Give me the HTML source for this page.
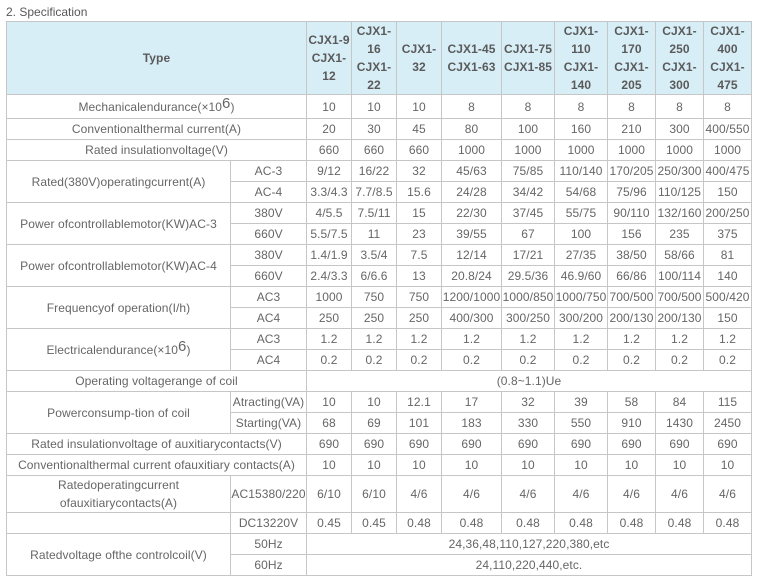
<!DOCTYPE html>
<html>
<head>
<meta charset="utf-8">
<style>
html,body{margin:0;padding:0;background:#fff;width:758px;height:585px;overflow:hidden}
body{position:relative;font-family:"Liberation Sans",Arial,sans-serif;font-size:12px;color:#666}
.t{position:absolute;left:6px;top:5px;line-height:14px;color:#585858;filter:blur(.25px)}
table{position:absolute;left:6px;top:21px;border-collapse:collapse;table-layout:fixed;width:746px;background:#fff;filter:blur(.25px)}
td{border:1px solid #c6c6c6;padding:0;text-align:center;vertical-align:middle;line-height:18px;white-space:nowrap;overflow:visible;letter-spacing:.08px}
tr.h td{background:#d8eef7;font-weight:bold;color:#5a5a5a}
.s{font-size:15px;position:relative;top:-3px;line-height:0}
</style>
</head>
<body>
<div class="t">2. Specification</div>
<table>
<colgroup><col style="width:224px"><col style="width:76px"><col style="width:45px"><col style="width:45px"><col style="width:45px"><col style="width:60px"><col style="width:53px"><col style="width:53px"><col style="width:48px"><col style="width:48px"><col style="width:48px"></colgroup>
<tr class="h" style="height:73px"><td colspan="2">Type</td><td>CJX1-9<br>CJX1-<br>12</td><td>CJX1-<br>16<br>CJX1-<br>22</td><td>CJX1-<br>32</td><td>CJX1-45<br>CJX1-63</td><td>CJX1-75<br>CJX1-85</td><td>CJX1-<br>110<br>CJX1-<br>140</td><td>CJX1-<br>170<br>CJX1-<br>205</td><td>CJX1-<br>250<br>CJX1-<br>300</td><td>CJX1-<br>400<br>CJX1-<br>475</td></tr>
<tr style="height:24px"><td colspan="2">Mechanicalendurance(×10<span class="s">6</span>)</td><td>10</td><td>10</td><td>10</td><td>8</td><td>8</td><td>8</td><td>8</td><td>8</td><td>8</td></tr>
<tr style="height:21px"><td colspan="2">Conventionalthermal current(A)</td><td>20</td><td>30</td><td>45</td><td>80</td><td>100</td><td>160</td><td>210</td><td>300</td><td>400/550</td></tr>
<tr style="height:21px"><td colspan="2">Rated insulationvoltage(V)</td><td>660</td><td>660</td><td>660</td><td>1000</td><td>1000</td><td>1000</td><td>1000</td><td>1000</td><td>1000</td></tr>
<tr style="height:21px"><td rowspan="2">Rated(380V)operatingcurrent(A)</td><td>AC-3</td><td>9/12</td><td>16/22</td><td>32</td><td>45/63</td><td>75/85</td><td>110/140</td><td>170/205</td><td>250/300</td><td>400/475</td></tr>
<tr style="height:21px"><td>AC-4</td><td>3.3/4.3</td><td>7.7/8.5</td><td>15.6</td><td>24/28</td><td>34/42</td><td>54/68</td><td>75/96</td><td>110/125</td><td>150</td></tr>
<tr style="height:21px"><td rowspan="2">Power ofcontrollablemotor(KW)AC-3</td><td>380V</td><td>4/5.5</td><td>7.5/11</td><td>15</td><td>22/30</td><td>37/45</td><td>55/75</td><td>90/110</td><td>132/160</td><td>200/250</td></tr>
<tr style="height:21px"><td>660V</td><td>5.5/7.5</td><td>11</td><td>23</td><td>39/55</td><td>67</td><td>100</td><td>156</td><td>235</td><td>375</td></tr>
<tr style="height:21px"><td rowspan="2">Power ofcontrollablemotor(KW)AC-4</td><td>380V</td><td>1.4/1.9</td><td>3.5/4</td><td>7.5</td><td>12/14</td><td>17/21</td><td>27/35</td><td>38/50</td><td>58/66</td><td>81</td></tr>
<tr style="height:21px"><td>660V</td><td>2.4/3.3</td><td>6/6.6</td><td>13</td><td>20.8/24</td><td>29.5/36</td><td>46.9/60</td><td>66/86</td><td>100/114</td><td>140</td></tr>
<tr style="height:21px"><td rowspan="2">Frequencyof operation(I/h)</td><td>AC3</td><td>1000</td><td>750</td><td>750</td><td>1200/1000</td><td>1000/850</td><td>1000/750</td><td>700/500</td><td>700/500</td><td>500/420</td></tr>
<tr style="height:21px"><td>AC4</td><td>250</td><td>250</td><td>250</td><td>400/300</td><td>300/250</td><td>300/200</td><td>200/130</td><td>200/130</td><td>150</td></tr>
<tr style="height:21px"><td rowspan="2">Electricalendurance(×10<span class="s">6</span>)</td><td>AC3</td><td>1.2</td><td>1.2</td><td>1.2</td><td>1.2</td><td>1.2</td><td>1.2</td><td>1.2</td><td>1.2</td><td>1.2</td></tr>
<tr style="height:21px"><td>AC4</td><td>0.2</td><td>0.2</td><td>0.2</td><td>0.2</td><td>0.2</td><td>0.2</td><td>0.2</td><td>0.2</td><td>0.2</td></tr>
<tr style="height:21px"><td colspan="2">Operating voltagerange of coil</td><td colspan="9">(0.8~1.1)Ue</td></tr>
<tr style="height:21px"><td rowspan="2">Powerconsump-tion of coil</td><td>Atracting(VA)</td><td>10</td><td>10</td><td>12.1</td><td>17</td><td>32</td><td>39</td><td>58</td><td>84</td><td>115</td></tr>
<tr style="height:21px"><td>Starting(VA)</td><td>68</td><td>69</td><td>101</td><td>183</td><td>330</td><td>550</td><td>910</td><td>1430</td><td>2450</td></tr>
<tr style="height:21px"><td colspan="2">Rated insulationvoltage of auxitiarycontacts(V)</td><td>690</td><td>690</td><td>690</td><td>690</td><td>690</td><td>690</td><td>690</td><td>690</td><td>690</td></tr>
<tr style="height:21px"><td colspan="2">Conventionalthermal current ofauxitiary contacts(A)</td><td>10</td><td>10</td><td>10</td><td>10</td><td>10</td><td>10</td><td>10</td><td>10</td><td>10</td></tr>
<tr style="height:37px"><td>Ratedoperatingcurrent<br>ofauxitiarycontacts(A)</td><td>AC15380/220</td><td>6/10</td><td>6/10</td><td>4/6</td><td>4/6</td><td>4/6</td><td>4/6</td><td>4/6</td><td>4/6</td><td>4/6</td></tr>
<tr style="height:21px"><td></td><td>DC13220V</td><td>0.45</td><td>0.45</td><td>0.48</td><td>0.48</td><td>0.48</td><td>0.48</td><td>0.48</td><td>0.48</td><td>0.48</td></tr>
<tr style="height:21px"><td rowspan="2">Ratedvoltage ofthe controlcoil(V)</td><td>50Hz</td><td colspan="9">24,36,48,110,127,220,380,etc</td></tr>
<tr style="height:21px"><td>60Hz</td><td colspan="9">24,110,220,440,etc.</td></tr>
</table>
</body>
</html>
